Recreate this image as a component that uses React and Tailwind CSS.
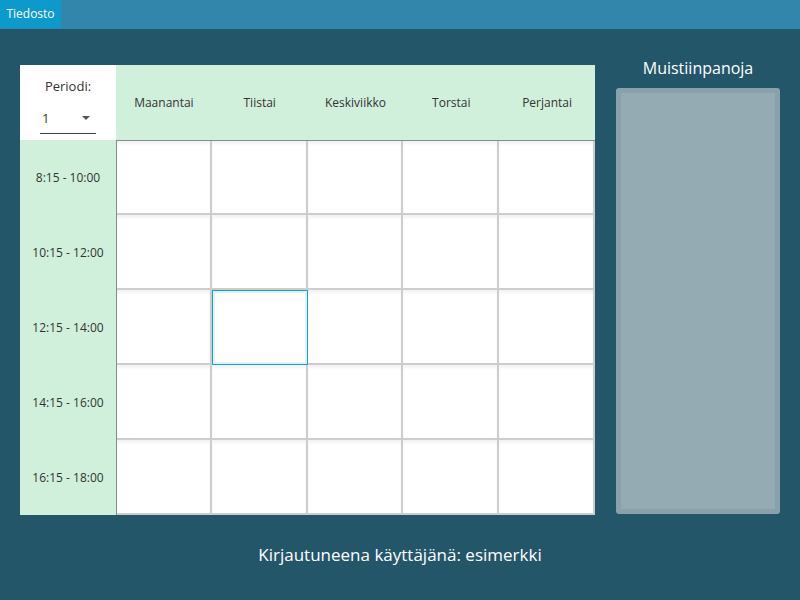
import React from 'react'

const days = ['Maanantai', 'Tiistai', 'Keskiviikko', 'Torstai', 'Perjantai']
const times = ['8:15 - 10:00', '10:15 - 12:00', '12:15 - 14:00', '14:15 - 16:00', '16:15 - 18:00']

function Cell({ active }) {
  return (
    <div
      className={
        active
          ? 'bg-white border border-[#1a9bd2] shadow-[inset_0_0_0_2px_#dff3fb]'
          : 'bg-white border-r-2 border-b-2 border-[#cdcdcd] shadow-[inset_0_3px_3px_rgba(0,0,0,0.05)]'
      }
    />
  )
}

export default function App() {
  return (
    <div className="w-[800px] h-[600px] bg-[#24566a] flex flex-col font-['Open_Sans','Noto_Sans',sans-serif]">
      <div className="h-[29px] bg-[#3386ab] flex items-start">
        <div className="h-[28px] w-[61px] bg-[#0c99cc] text-white text-[12px] flex items-center justify-center">
          Tiedosto
        </div>
      </div>

      <div className="flex px-[20px] pt-[36px] gap-[21px]">
        <div className="w-[575px] h-[450px] grid grid-cols-[96px_repeat(5,1fr)] grid-rows-[75px_repeat(5,1fr)]">
          <div className="bg-white flex flex-col items-center pt-[12px]">
            <span className="text-[13px] text-[#333]">Periodi:</span>
            <div className="mt-[12px] w-[56px] border-b border-[#444] flex items-center justify-between px-[2px] pb-[5px]">
              <span className="text-[13px] text-[#333]">1</span>
              <span className="w-0 h-0 border-l-[4px] border-r-[4px] border-t-[4px] border-l-transparent border-r-transparent border-t-[#555] mr-[4px]" />
            </div>
          </div>
          {days.map((d) => (
            <div key={d} className="bg-[#d0f0dc] flex items-center justify-center text-[12px] text-[#333]">
              {d}
            </div>
          ))}
          {times.map((t, r) => (
            <React.Fragment key={t}>
              <div className="bg-[#d0f0dc] flex items-center justify-center text-[12px] text-[#333]">{t}</div>
              {days.map((d, c) => (
                <div
                  key={d}
                  className={
                    (c === 0 ? 'border-l border-[#8a8a8a] ' : '') +
                    (r === 0 ? 'border-t border-[#8a8a8a] ' : '') +
                    'flex'
                  }
                >
                  <div className="flex-1 grid">
                    <Cell active={r === 2 && c === 1} />
                  </div>
                </div>
              ))}
            </React.Fragment>
          ))}
        </div>

        <div className="w-[164px] flex flex-col items-center">
          <div className="h-[24px] text-white text-[16px] leading-[24px] -mt-[9px]">Muistiinpanoja</div>
          <div className="mt-[8px] w-[164px] h-[426px] rounded-[3px] bg-[#89a1ab] p-[5px]">
            <div className="w-full h-full bg-[#94abb4]" />
          </div>
        </div>
      </div>

      <div className="mt-[27px] text-center text-white text-[17px]">
        Kirjautuneena käyttäjänä: esimerkki
      </div>
    </div>
  )
}
